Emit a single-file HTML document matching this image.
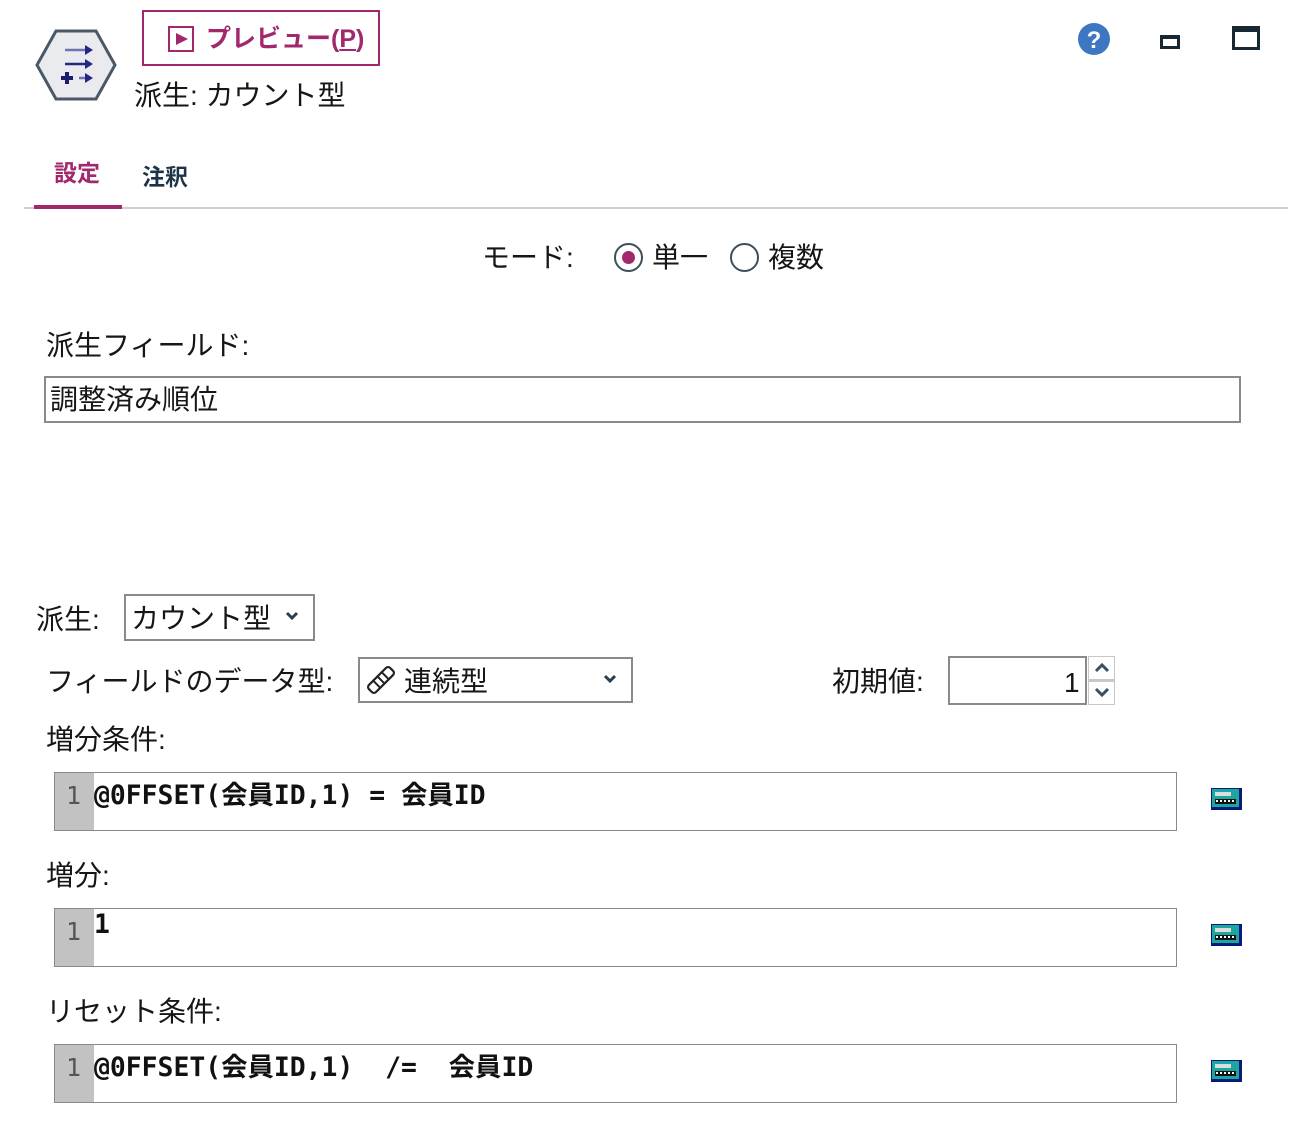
<!DOCTYPE html>
<html><head><meta charset="utf-8"><style>
*{margin:0;padding:0;box-sizing:border-box}
body{width:1310px;height:1124px;background:#fff;position:relative;overflow:hidden;font-family:"Liberation Sans","Noto Sans CJK JP",sans-serif;color:#161616}
.a{position:absolute;white-space:nowrap}
.lbl{font-size:28px;line-height:34px}
.box{position:absolute;border:2px solid #8a8a8a;background:#fff}
.code{position:absolute;border:1.5px solid #8a8a8a;background:#fff;height:59px;width:1123px;left:54px}
.code .g{position:absolute;left:0;top:0;bottom:0;width:39px;background:#c2c2c2;font-family:"DejaVu Sans Mono",monospace;font-size:25px;color:#555;padding-left:11px;padding-top:8px}
.code .t{position:absolute;left:39px;top:0px;font-family:"DejaVu Sans Mono","Noto Sans CJK JP",monospace;font-size:26.4px;font-weight:bold;white-space:pre;color:#111}
.ico{position:absolute;left:1211px;width:31px;height:22px}
</style></head><body>

<svg class="a" style="left:35px;top:28px" width="82" height="74" viewBox="0 0 82 74">
<polygon points="21,3 61,3 80,37 61,71 21,71 2,37" fill="#e9ebee" stroke="#4b5966" stroke-width="3"/>
<g stroke="#23287e" stroke-width="2.5" fill="#23287e">
<line x1="30" y1="22" x2="52" y2="22" stroke="#6d73b5"/><polygon points="50,17 58,22 50,27" stroke="none"/>
<line x1="30" y1="36" x2="52" y2="36"/><polygon points="50,31 58,36 50,41" stroke="none"/>
<line x1="44" y1="50" x2="52" y2="50" stroke="#6d73b5"/><polygon points="50,45 58,50 50,55" stroke="none"/>
</g>
<rect x="26" y="48" width="12" height="4" fill="#1a1d6e"/><rect x="30" y="44" width="4" height="12" fill="#1a1d6e"/>
</svg>

<div class="a" style="left:142px;top:10px;width:238px;height:56px;border:2px solid #a2286c"></div>
<div class="a" style="left:168px;top:26px;width:26px;height:26px;border:2px solid #a2286c"></div>
<svg class="a" style="left:175px;top:32px" width="14" height="14"><polygon points="1,1 13,7 1,13" fill="#a2286c"/></svg>
<div class="a" style="left:206px;top:22px;font-size:25px;font-weight:bold;color:#a2286c;line-height:34px">プレビュー(<u>P</u>)</div>

<div class="a" style="left:134px;top:78px;font-size:28px;line-height:36px">派生: カウント型</div>

<svg class="a" style="left:1077px;top:22px" width="34" height="34"><circle cx="17" cy="17" r="16" fill="#3d77c2"/><text x="17" y="26" text-anchor="middle" font-family="Liberation Sans" font-weight="bold" font-size="24" fill="#fff">?</text></svg>
<div class="a" style="left:1160px;top:35px;width:20px;height:14px;border:3px solid #172833;border-top-width:4px"></div>
<div class="a" style="left:1232px;top:26px;width:28px;height:24px;border:3px solid #172833;border-top-width:6px"></div>

<div class="a" style="left:54px;top:154px;font-size:23px;font-weight:bold;color:#a2286c">設定</div>
<div class="a" style="left:142px;top:158px;font-size:23px;font-weight:bold;color:#1d3448">注釈</div>
<div class="a" style="left:24px;top:207px;width:1264px;height:2px;background:#cfcfcf"></div>
<div class="a" style="left:34px;top:205px;width:88px;height:4px;background:#a2286c"></div>

<div class="a lbl" style="left:482px;top:241px">モード:</div>
<div class="a" style="left:614px;top:243px;width:29px;height:29px;border:2px solid #3e4f5c;border-radius:50%"></div>
<div class="a" style="left:622px;top:251px;width:13px;height:13px;background:#a2286c;border-radius:50%"></div>
<div class="a lbl" style="left:652px;top:241px">単一</div>
<div class="a" style="left:730px;top:243px;width:29px;height:29px;border:2px solid #3e4f5c;border-radius:50%"></div>
<div class="a lbl" style="left:768px;top:241px">複数</div>

<div class="a lbl" style="left:46px;top:329px">派生フィールド:</div>
<div class="box" style="left:44px;top:376px;width:1197px;height:47px"></div>
<div class="a lbl" style="left:50px;top:383px">調整済み順位</div>

<div class="a lbl" style="left:36px;top:603px">派生:</div>
<div class="box" style="left:124px;top:594px;width:191px;height:47px"></div>
<div class="a lbl" style="left:131px;top:602px">カウント型</div>
<svg class="a" style="left:285px;top:611px" width="14" height="10"><polyline points="2,2 7,7 12,2" fill="none" stroke="#2b3f52" stroke-width="3"/></svg>

<div class="a lbl" style="left:46px;top:665px">フィールドのデータ型:</div>
<div class="box" style="left:358px;top:657px;width:275px;height:46px"></div>
<svg class="a" style="left:364px;top:664px" width="34" height="32" viewBox="0 0 34 32"><g transform="rotate(-45 17 16)"><rect x="2" y="11" width="30" height="10" rx="3" fill="none" stroke="#222" stroke-width="2.2"/><line x1="11" y1="11" x2="11" y2="21" stroke="#222" stroke-width="2"/><line x1="17" y1="11" x2="17" y2="21" stroke="#222" stroke-width="2"/><line x1="23" y1="11" x2="23" y2="21" stroke="#222" stroke-width="2"/></g></svg>
<div class="a lbl" style="left:404px;top:665px">連続型</div>
<svg class="a" style="left:603px;top:674px" width="14" height="10"><polyline points="2,2 7,7 12,2" fill="none" stroke="#2b3f52" stroke-width="3"/></svg>

<div class="a lbl" style="left:832px;top:665px">初期値:</div>
<div class="box" style="left:948px;top:656px;width:139px;height:49px"></div>
<div class="a lbl" style="left:1064px;top:666px;font-size:28px">1</div>
<div class="a" style="left:1088px;top:656px;width:27px;height:49px;border:1.5px solid #c8c8c8"></div>
<div class="a" style="left:1088px;top:679px;width:27px;height:3px;background:#c8c8c8"></div>
<svg class="a" style="left:1094px;top:662px" width="16" height="12"><polyline points="2,9 8,3 14,9" fill="none" stroke="#3b4f60" stroke-width="3"/></svg>
<svg class="a" style="left:1094px;top:686px" width="16" height="12"><polyline points="2,3 8,9 14,3" fill="none" stroke="#3b4f60" stroke-width="3"/></svg>

<div class="a lbl" style="left:46px;top:723px">増分条件:</div>
<div class="code" style="top:772px"><div class="g">1</div><div class="t">@0FFSET(会員ID,1) = 会員ID</div></div>

<div class="a lbl" style="left:46px;top:859px">増分:</div>
<div class="code" style="top:908px"><div class="g">1</div><div class="t">1</div></div>

<div class="a lbl" style="left:46px;top:995px">リセット条件:</div>
<div class="code" style="top:1044px"><div class="g">1</div><div class="t">@0FFSET(会員ID,1)  /=  会員ID</div></div>

<svg class="ico" style="top:788px" viewBox="0 0 31 22"><rect x="0" y="0" width="31" height="22" fill="#0a1a7a"/><rect x="1" y="1" width="27" height="18" fill="#19a7a0"/><rect x="4" y="4" width="16" height="4" fill="#ddd"/><rect x="4" y="11" width="21" height="5" fill="#111"/><g fill="#fff"><rect x="5" y="12" width="2" height="2"/><rect x="9" y="12" width="2" height="2"/><rect x="13" y="12" width="2" height="2"/><rect x="17" y="12" width="2" height="2"/><rect x="21" y="12" width="2" height="2"/></g></svg>
<svg class="ico" style="top:924px" viewBox="0 0 31 22"><rect x="0" y="0" width="31" height="22" fill="#0a1a7a"/><rect x="1" y="1" width="27" height="18" fill="#19a7a0"/><rect x="4" y="4" width="16" height="4" fill="#ddd"/><rect x="4" y="11" width="21" height="5" fill="#111"/><g fill="#fff"><rect x="5" y="12" width="2" height="2"/><rect x="9" y="12" width="2" height="2"/><rect x="13" y="12" width="2" height="2"/><rect x="17" y="12" width="2" height="2"/><rect x="21" y="12" width="2" height="2"/></g></svg>
<svg class="ico" style="top:1060px" viewBox="0 0 31 22"><rect x="0" y="0" width="31" height="22" fill="#0a1a7a"/><rect x="1" y="1" width="27" height="18" fill="#19a7a0"/><rect x="4" y="4" width="16" height="4" fill="#ddd"/><rect x="4" y="11" width="21" height="5" fill="#111"/><g fill="#fff"><rect x="5" y="12" width="2" height="2"/><rect x="9" y="12" width="2" height="2"/><rect x="13" y="12" width="2" height="2"/><rect x="17" y="12" width="2" height="2"/><rect x="21" y="12" width="2" height="2"/></g></svg>

</body></html>
